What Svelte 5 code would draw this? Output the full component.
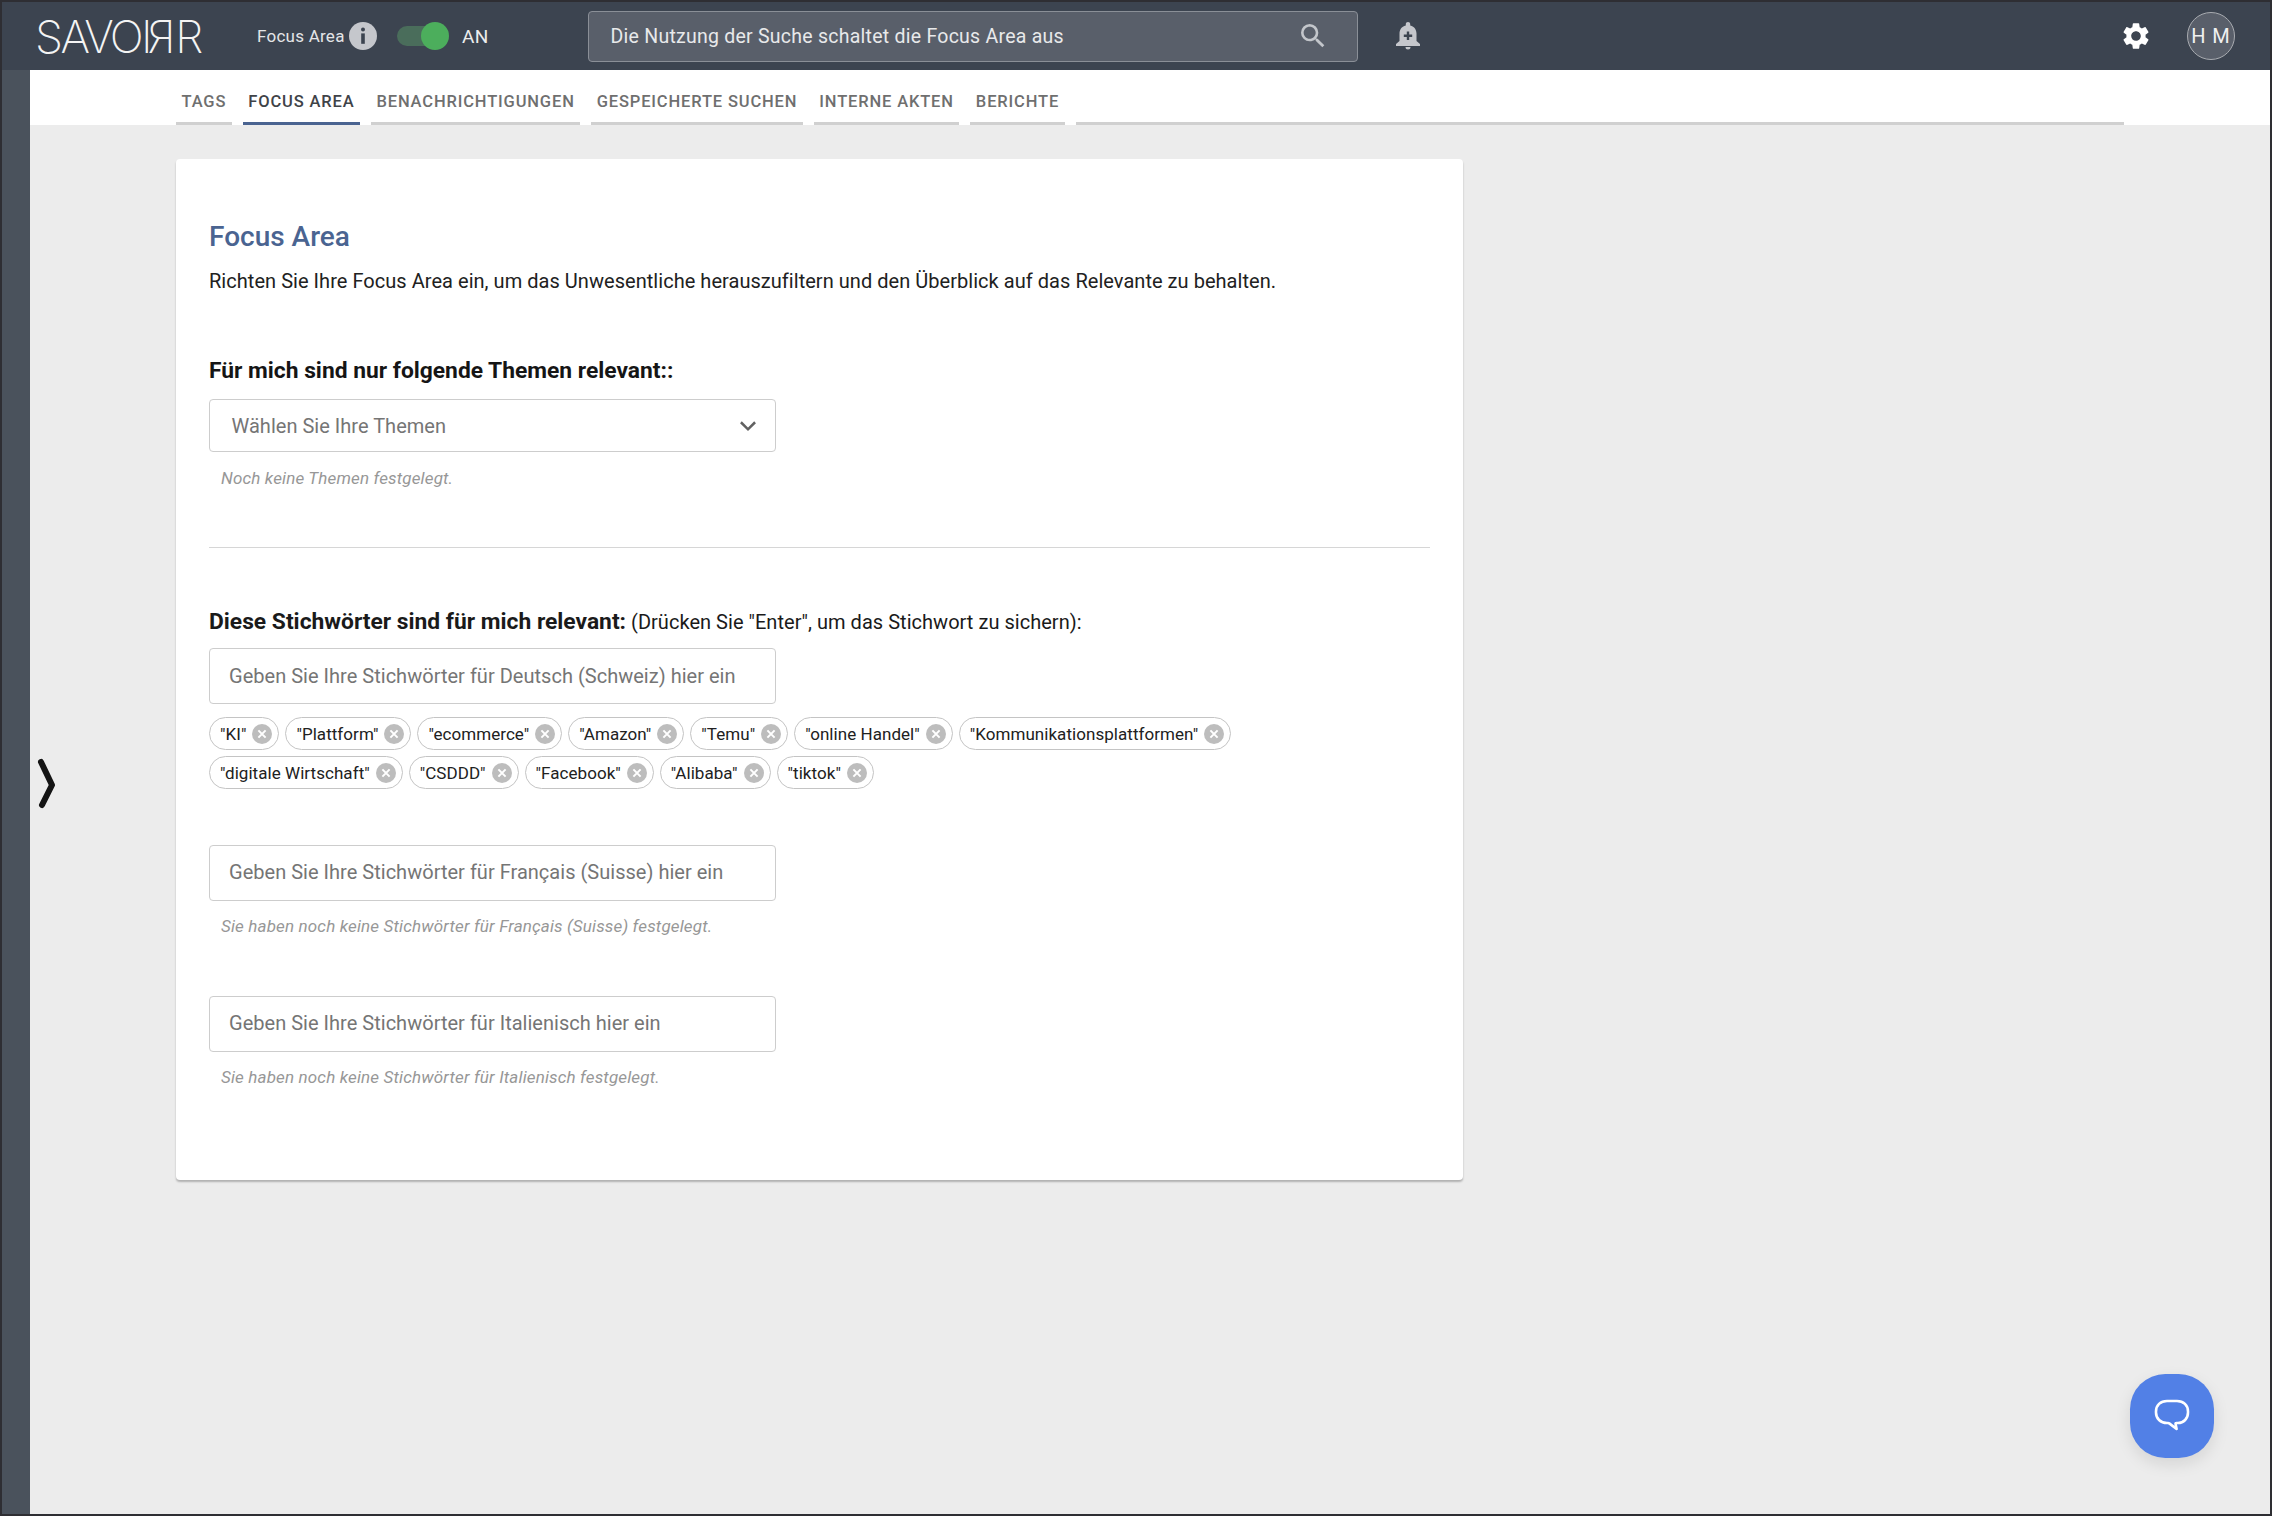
<script>
  const tabs = [
    { label: 'TAGS' },
    { label: 'FOCUS AREA', active: true },
    { label: 'BENACHRICHTIGUNGEN' },
    { label: 'GESPEICHERTE SUCHEN' },
    { label: 'INTERNE AKTEN' },
    { label: 'BERICHTE' }
  ];
  const row1 = ['"KI"', '"Plattform"', '"ecommerce"', '"Amazon"', '"Temu"', '"online Handel"', '"Kommunikationsplattformen"'];
  const row2 = ['"digitale Wirtschaft"', '"CSDDD"', '"Facebook"', '"Alibaba"', '"tiktok"'];
</script>

{#snippet chip(text)}
  <span class="chip">
    <span>{text}</span>
    <svg class="x" viewBox="0 0 20 20" width="20" height="20">
      <circle cx="10" cy="10" r="10" fill="#bdbdbd" />
      <path d="M6.4 6.4l7.2 7.2M13.6 6.4l-7.2 7.2" stroke="#fff" stroke-width="2" />
    </svg>
  </span>
{/snippet}

<div class="frame">
  <header class="top">
    <div class="logo">SAVOI<span class="mirror">R</span>R</div>
    <div class="fa">Focus Area</div>
    <svg class="info" viewBox="0 0 28 28" width="28" height="28">
      <circle cx="14" cy="14" r="14" fill="#c5c7cc" />
      <circle cx="14" cy="7.6" r="2" fill="#3c4450" />
      <rect x="12.2" y="11.4" width="3.6" height="10.4" fill="#3c4450" />
    </svg>
    <div class="switch"><span class="track"></span><span class="thumb"></span></div>
    <div class="an">AN</div>
    <div class="search">
      <span>Die Nutzung der Suche schaltet die Focus Area aus</span>
      <svg viewBox="0 0 24 24" width="32" height="32">
        <path fill="#c3c6cb" d="M15.5 14h-.79l-.28-.27A6.47 6.47 0 0 0 16 9.5 6.5 6.5 0 1 0 9.5 16c1.61 0 3.09-.59 4.23-1.57l.27.28v.79l5 4.99L20.49 19l-4.99-5zm-6 0C7.01 14 5 11.99 5 9.5S7.01 5 9.5 5 14 7.01 14 9.5 11.99 14 9.5 14z" />
      </svg>
    </div>
    <svg class="bell" viewBox="0 0 26 30" width="26" height="30">
      <path fill="#c5c7cc" d="M13 1c-1.300 0-2.200.9-2.200 2.100v1.300C6.400 5.500 4.500 8.800 4.500 12.500V20L1 23v2h24v-2l-3.500-3v-7.500c0-3.700-1.900-7-6.300-8.100V3.100C15.200 1.900 14.300 1 13 1zM10.500 26a2.500 2.500 0 0 0 5 0z" />
      <path d="M13 10.500v8.500M8.800 14.700h8.400" stroke="#3c4450" stroke-width="2.400" />
    </svg>
    <div class="spacer"></div>
    <svg class="gear" viewBox="0 0 24 24" width="32" height="32">
      <path fill="#fff" d="M19.14 12.94c.04-.3.06-.61.06-.94 0-.32-.02-.64-.07-.94l2.030-1.580a.49.49 0 0 0 .12-.61l-1.920-3.320a.488.488 0 0 0-.59-.22l-2.390.96c-.5-.38-1.030-.7-1.620-.94l-.36-2.540a.484.484 0 0 0-.48-.41h-3.840c-.24 0-.43.170-.47.41l-.36 2.540c-.59.24-1.130.57-1.620.94l-2.390-.96c-.22-.08-.47 0-.59.22L2.740 8.870c-.12.21-.08.47.12.61l2.030 1.580c-.05.3-.09.63-.09.94s.02.64.07.94l-2.030 1.580a.49.49 0 0 0-.12.61l1.920 3.320c.12.22.37.29.59.22l2.390-.96c.5.38 1.030.7 1.620.94l.36 2.540c.05.24.24.41.48.41h3.840c.24 0 .44-.17.47-.41l.36-2.540c.59-.24 1.130-.56 1.620-.94l2.390.96c.22.08.47 0 .59-.22l1.920-3.320c.12-.22.07-.47-.12-.61l-2.010-1.580zM12 15.600A3.610 3.610 0 0 1 8.400 12c0-1.980 1.620-3.600 3.600-3.600s3.600 1.620 3.600 3.600-1.620 3.600-3.600 3.600z" />
    </svg>
    <div class="avatar">H M</div>
  </header>

  <div class="body">
    <aside class="rail"></aside>
    <div class="main">
      <nav class="tabs">
        {#each tabs as tab}
          <div class="tab" class:active={tab.active}>{tab.label}</div>
        {/each}
        <div class="tail"></div>
      </nav>

      <section class="card">
        <h1>Focus Area</h1>
        <p class="lead">Richten Sie Ihre Focus Area ein, um das Unwesentliche herauszufiltern und den Überblick auf das Relevante zu behalten.</p>

        <h2 class="themes">Für mich sind nur folgende Themen relevant::</h2>
        <div class="field select">
          <span>Wählen Sie Ihre Themen</span>
          <svg viewBox="0 0 24 24" width="20" height="20">
            <path d="M3.500 7.500L12 16l8.500-8.500" fill="none" stroke="#616161" stroke-width="3" />
          </svg>
        </div>
        <p class="hint first">Noch keine Themen festgelegt.</p>

        <hr />

        <p class="kw"><b>Diese Stichwörter sind für mich relevant:</b> (Drücken Sie "Enter", um das Stichwort zu sichern):</p>
        <div class="field input">Geben Sie Ihre Stichwörter für Deutsch (Schweiz) hier ein</div>
        <div class="chips">
          <div class="row">{#each row1 as c}{@render chip(c)}{/each}</div>
          <div class="row">{#each row2 as c}{@render chip(c)}{/each}</div>
        </div>

        <div class="field input fr">Geben Sie Ihre Stichwörter für Français (Suisse) hier ein</div>
        <p class="hint">Sie haben noch keine Stichwörter für Français (Suisse) festgelegt.</p>

        <div class="field input it">Geben Sie Ihre Stichwörter für Italienisch hier ein</div>
        <p class="hint">Sie haben noch keine Stichwörter für Italienisch festgelegt.</p>
      </section>
    </div>
  </div>

  <svg class="chev" viewBox="0 0 22 54" width="22" height="54">
    <path d="M5 5L16 28L6 48" fill="none" stroke="#141414" stroke-width="6" stroke-linecap="round" stroke-linejoin="round" />
  </svg>

  <button class="help" aria-label="Hilfe">
    <svg viewBox="0 0 36 36" width="36" height="36">
      <path d="M13 2h10c6.500 0 11 4.200 11 10.500v1c0 6-4.300 10.500-10 10.500h-1.500c-.8 0-1.200.2-.9 1l1 5-7-5.400c-.5-.4-1-.6-1.600-.6H13C6.500 24 2 19.500 2 13.500v-1C2 6.200 6.500 2 13 2z" transform="translate(0 1)" fill="none" stroke="#fff" stroke-width="2.600" stroke-linejoin="round" />
    </svg>
  </button>
</div>

<style>
  :global(body) {
    margin: 0;
    background: #ececec;
    font-family: Roboto, "Liberation Sans", sans-serif;
  }
  .frame {
    position: relative;
    width: 2272px;
    height: 1516px;
    box-sizing: border-box;
    border: 2px solid #2e2e33;
    display: flex;
    flex-direction: column;
    overflow: hidden;
    background: #ececec;
  }
  .top {
    height: 68px;
    flex: none;
    background: #3c4450;
    display: flex;
    align-items: center;
    color: #fff;
  }
  .logo {
    width: 222px;
    margin-left: 33px;
    font-family: Inter, sans-serif;
    font-weight: 200;
    font-size: 45px;
    line-height: 45px;
    letter-spacing: -2.600px;
    color: #f4f4f4;
    flex: none;
    white-space: nowrap;
  }
  .mirror {
    display: inline-block;
    transform: scaleX(-1);
  }
  .fa {
    font-size: 17px;
    color: #e4e5e7;
    letter-spacing: 0.25px;
    flex: none;
    width: 92px;
  }
  .info { flex: none; }
  .switch {
    position: relative;
    width: 52px;
    height: 28px;
    margin-left: 20px;
    flex: none;
  }
  .track {
    position: absolute;
    left: 0;
    top: 4px;
    width: 50px;
    height: 20px;
    border-radius: 10px;
    background: #4a6d5b;
  }
  .thumb {
    position: absolute;
    left: 24px;
    top: 0;
    width: 28px;
    height: 28px;
    border-radius: 50%;
    background: #4cae5c;
  }
  .an {
    margin-left: 13px;
    font-size: 19px;
    letter-spacing: 0.3px;
    color: #eceded;
    width: 126px;
    flex: none;
  }
  .search {
    width: 770px;
    height: 51px;
    flex: none;
    box-sizing: border-box;
    border: 1.500px solid #8a8f97;
    border-radius: 4px;
    background: #595f6a;
    display: flex;
    align-items: center;
    justify-content: space-between;
    padding: 0 28px 0 21.500px;
    font-size: 19.500px;
    color: #e8e9ea;
    letter-spacing: 0.25px;
  }
  .bell { flex: none; margin-left: 37px; }
  .spacer { flex: 1; }
  .gear { flex: none; margin-right: 35px; }
  .avatar {
    width: 48px;
    height: 48px;
    flex: none;
    box-sizing: border-box;
    margin-right: 35px;
    border-radius: 50%;
    border: 1.500px solid #a9acb1;
    background: #595f6a;
    display: flex;
    align-items: center;
    justify-content: center;
    font-size: 20px;
    color: #f0f0f0;
    letter-spacing: 1px;
  }
  .body {
    flex: 1;
    display: flex;
    min-height: 0;
  }
  .rail {
    width: 28px;
    flex: none;
    background: #4a525c;
  }
  .main {
    flex: 1;
    min-width: 0;
  }
  .tabs {
    height: 55px;
    box-sizing: border-box;
    background: #fff;
    display: flex;
    gap: 11px;
    padding-left: 146px;
    padding-right: 146px;
  }
  .tab {
    box-sizing: border-box;
    height: 55px;
    padding: 0 5.500px;
    line-height: 64px;
    border-bottom: 3px solid #d0d0d0;
    font-size: 16.500px;
    font-weight: 500;
    letter-spacing: 0.85px;
    color: #6f6f6f;
    white-space: nowrap;
  }
  .tab.active {
    color: #3f4348;
    border-bottom-color: #4a6491;
  }
  .tail {
    flex: 1;
    border-bottom: 3px solid #d0d0d0;
  }
  .card {
    width: 1287px;
    height: 1021px;
    box-sizing: border-box;
    margin: 34px 0 0 146px;
    padding: 62px 33px 0;
    background: #fff;
    border-radius: 4px;
    box-shadow: 0 2px 2px rgba(0, 0, 0, 0.25);
  }
  h1 {
    margin: 0;
    font-size: 28px;
    line-height: 32px;
    font-weight: 500;
    color: #4a6491;
  }
  .lead {
    margin: 14px 0 0;
    font-size: 20px;
    line-height: 28px;
    letter-spacing: 0.04px;
    color: #212121;
  }
  h2 {
    margin: 0;
    font-size: 22.800px;
    line-height: 28px;
    font-weight: 700;
    color: #151515;
  }
  .themes { margin-top: 62px; }
  .field {
    width: 567px;
    box-sizing: border-box;
    border: 1.500px solid #cdcdcd;
    border-radius: 4px;
    font-size: 20px;
    letter-spacing: 0.02px;
    color: #757575;
    display: flex;
    align-items: center;
  }
  .select {
    height: 53px;
    margin-top: 14px;
    padding: 0 17px 0 21.500px;
    justify-content: space-between;
  }
  .input {
    height: 56px;
    padding-left: 19px;
  }
  .hint {
    margin: 14px 0 0 12px;
    font-size: 17px;
    line-height: 22px;
    font-style: italic;
    letter-spacing: 0.15px;
    color: #979797;
  }
  .hint.first { margin-top: 15px; }
  hr {
    margin: 58px 0 0;
    border: 0;
    border-top: 1px solid #d6d6d6;
  }
  .kw {
    margin: 60px 0 0;
    font-size: 20px;
    line-height: 28px;
    letter-spacing: 0.03px;
    color: #1a1a1a;
  }
  .kw b { font-size: 22.800px; font-weight: 700; letter-spacing: 0; }
  .kw + .field { margin-top: 12px; }
  .chips { margin-top: 13px; display: flex; flex-direction: column; gap: 6px; }
  .row { display: flex; gap: 6px; }
  .chip {
    height: 33px;
    box-sizing: border-box;
    border: 1.500px solid #c4c4c4;
    border-radius: 17px;
    padding: 0 6px 0 10px;
    display: flex;
    align-items: center;
    gap: 6px;
    font-size: 17px;
    letter-spacing: 0.05px;
    color: #212121;
    white-space: nowrap;
  }
  .x { flex: none; }
  .fr { margin-top: 56px; padding-bottom: 2px; }
  .it { margin-top: 59px; padding-bottom: 2px; }
  .chev {
    position: absolute;
    left: 34px;
    top: 755px;
  }
  .help {
    position: absolute;
    left: 2128px;
    top: 1372px;
    width: 84px;
    height: 84px;
    padding: 0;
    border: 0;
    border-radius: 42%;
    background: #5280e6;
    box-shadow: 0 6px 16px rgba(0, 0, 0, 0.1);
    display: flex;
    align-items: center;
    justify-content: center;
  }
</style>
